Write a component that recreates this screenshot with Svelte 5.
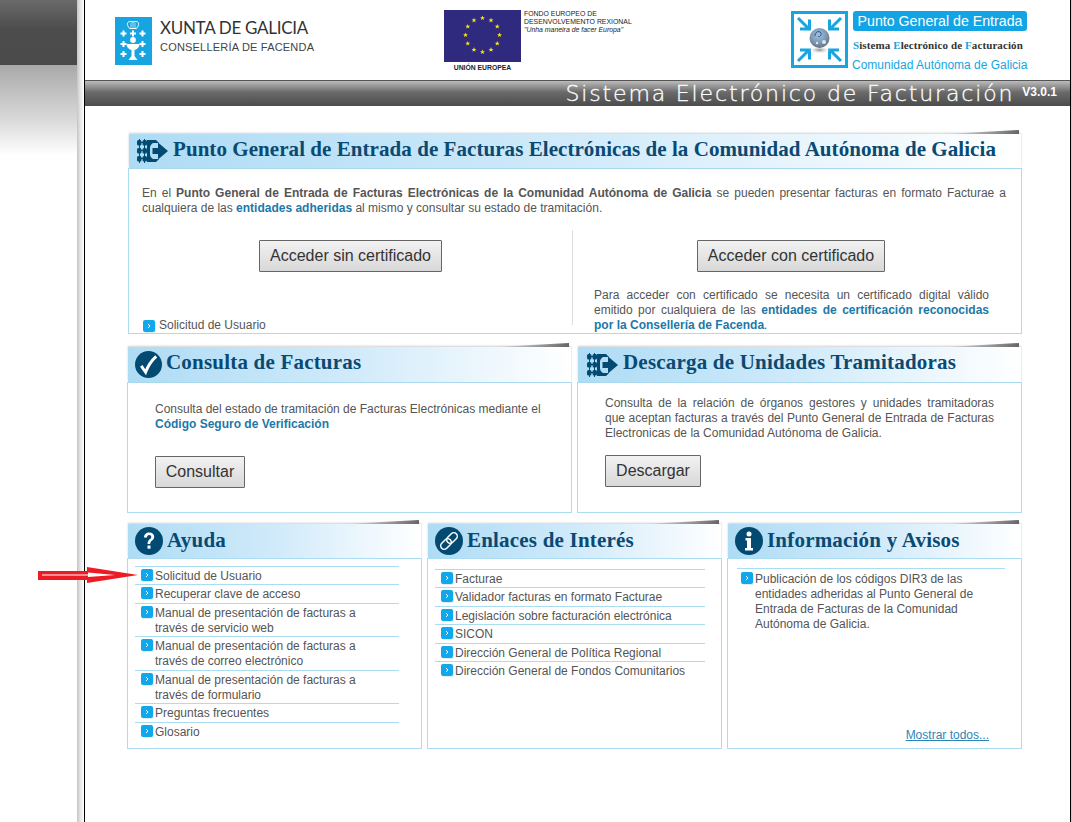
<script>
  const ayuda = [
    ['Solicitud de Usuario'],
    ['Recuperar clave de acceso'],
    ['Manual de presentación de facturas a', 'través de servicio web'],
    ['Manual de presentación de facturas a', 'través de correo electrónico'],
    ['Manual de presentación de facturas a', 'través de formulario'],
    ['Preguntas frecuentes'],
    ['Glosario']
  ];
  const enlaces = [
    ['Facturae'],
    ['Validador facturas en formato Facturae'],
    ['Legislación sobre facturación electrónica'],
    ['SICON'],
    ['Dirección General de Política Regional'],
    ['Dirección General de Fondos Comunitarios']
  ];
  const avisos = [['Publicación de los códigos DIR3 de las', 'entidades adheridas al Punto General de', 'Entrada de Facturas de la Comunidad', 'Autónoma de Galicia.']];
  const stars = Array.from({ length: 12 }, (_, i) => {
    const a = (i * Math.PI) / 6;
    return { x: 38.5 + 17 * Math.sin(a), y: 25 - 17 * Math.cos(a) };
  });
  const crosses = [[8.5,16.5],[18,16.5],[27.5,16.5],[8.5,27],[27.5,27],[8.5,37],[27.5,37]];
  const gridRows = [1, 9, 17];
</script>

{#snippet gridArrow()}
  <svg class="hicon arrowicon" viewBox="0 0 31 24" aria-hidden="true">
    {#each gridRows as y}
      <rect x="0" {y} width="4.500" height="5.500" rx="1.500" fill="#034a73"/>
      <rect x="5.500" {y} width="4.500" height="5.500" rx="1.500" fill="#034a73"/>
    {/each}
    <path fill="#034a73" d="M0 3h10v1H0zM0 11h10v1H0zM0 19h10v1H0zM2 0h1v24H2zM7 0h1v24H7z"/>
    <path fill="#034a73" d="M10 1h9l3 3h-6c-2 1-3 3-3 5v6c0 2 1 4 3 5h6l-3 3h-9z"/>
    <path fill="#034a73" d="M15.500 9H21V3.500l10 8.500-10 8.500V15h-5.500z"/>
  </svg>
{/snippet}

{#snippet circle(kind)}
  <svg class="hicon circleicon" viewBox="0 0 28 28" aria-hidden="true">
    <circle cx="14" cy="14" r="14" fill="#034a73"/>
    {#if kind === 'check'}
      <path d="M6.500 15.500 L11 22 C13.500 15 17 10 22 5.500" fill="none" stroke="#fff" stroke-width="3"/>
    {:else if kind === 'help'}
      <path d="M9 10.500c0-3 2.200-5 5.200-5 3 0 5 1.800 5 4.300 0 3.700-4 3.700-4 7.200h-2.700c0-4.800 3.800-4.700 3.800-7 0-1.200-.9-2-2.100-2-1.400 0-2.200 1-2.200 2.500z" fill="#fff"/>
      <rect x="12.500" y="18.500" width="3" height="3.200" fill="#fff"/>
    {:else if kind === 'info'}
      <circle cx="14" cy="7" r="2.500" fill="#fff"/>
      <path d="M10.500 11h5.500v10h2v2.500h-8V21h2v-7.500h-1.500z" fill="#fff"/>
    {:else}
      <g fill="none" stroke="#fff" stroke-width="1.500">
        <rect x="13.500" y="5" width="7" height="12" rx="3.500" transform="rotate(45 17 11)"/>
        <rect x="7.500" y="11" width="7" height="12" rx="3.500" transform="rotate(45 11 17)"/>
      </g>
    {/if}
  </svg>
{/snippet}

{#snippet bullet()}
  <span class="bullet"><svg viewBox="0 0 12 12" aria-hidden="true"><path d="M5 4l2 2-2 2" fill="none" stroke="#fff" stroke-width="1"/></svg></span>
{/snippet}

{#snippet links(items)}
  <ul class="links">
    {#each items as lines}
      <li>{@render bullet()}<span>{#each lines as l}<span class="line">{l}</span>{/each}</span></li>
    {/each}
  </ul>
{/snippet}

{#snippet head(title, variant)}
  <header class="phead {variant}">
    <span class="corner"></span>
    {#if title.startsWith('Punto') || title.startsWith('Descarga')}
      {@render gridArrow()}
    {:else if title.startsWith('Consulta')}
      {@render circle('check')}
    {:else if title.startsWith('Ayuda')}
      {@render circle('help')}
    {:else if title.startsWith('Enlaces')}
      {@render circle('link')}
    {:else}
      {@render circle('info')}
    {/if}
    <h2>{title}</h2>
  </header>
{/snippet}

<div class="page">
  <aside class="side"><div class="side-dark"></div><div class="side-fade"></div></aside>
  <div class="strip"></div>
  <main class="main">
    <div class="logos">
      <div class="xunta">
        <svg class="xmark" viewBox="0 0 37 48" aria-hidden="true">
          <rect width="37" height="48" fill="#16a5e0"/>
          <path d="M13.500 5c-2 1-1 4 1 6.500h7c2-2.500 3-5.500 1-6.500-1.500-1-3-.5-4.500 0-1.500-.5-3-1-4.500 0z" fill="none" stroke="#fff" stroke-width="1"/>
          <path d="M16 5.500v6M18 5v6.500M20 5.500v6" stroke="#fff" stroke-width=".6"/>
          <g fill="#fff">
            {#each crosses as c}
              <path d="M{c[0]-1} {c[1]-3}h2v2h2v2h-2v2h-2v-2h-2v-2h2z"/>
            {/each}
            <circle cx="18" cy="23" r="2.900"/>
            <path d="M11.500 27h13c0 4-3.500 5.500-5 6v6l3 4h-9l3-4v-6c-1.500-.5-5-2-5-6z"/>
          </g>
        </svg>
        <div class="xtext">
          <div class="xname">XUNTA DE GALICIA</div>
          <div class="xsub">CONSELLERÍA DE FACENDA</div>
        </div>
      </div>
      <div class="eu">
        <div class="eucol">
          <svg class="flag" viewBox="0 0 77 52" aria-hidden="true">
            <rect width="77" height="52" fill="#2f2a7d"/>
            {#each stars as s}
              <path transform="translate({s.x} {s.y})" d="M0-2.600.7-.8 2.500-.8 1.100.3 1.600 2.100 0 1 -1.600 2.100 -1.100.3 -2.500-.8 -.7-.8z" fill="#f6e11a"/>
            {/each}
          </svg>
          <div class="eucap">UNIÓN EUROPEA</div>
        </div>
        <div class="eutext">
          <div>FONDO EUROPEO DE</div>
          <div>DESENVOLVEMENTO REXIONAL</div>
          <div class="euit">"Unha maneira de facer Europa"</div>
        </div>
      </div>
      <div class="pge">
        <svg class="pgemark" viewBox="0 0 57 57" aria-hidden="true">
          <defs>
            <radialGradient id="globe" cx=".45" cy=".35" r=".7">
              <stop offset="0" stop-color="#9cc3e6"/>
              <stop offset=".6" stop-color="#7c95ae"/>
              <stop offset="1" stop-color="#5d6a78"/>
            </radialGradient>
            <radialGradient id="gshadow">
              <stop offset="0" stop-color="#888"/>
              <stop offset="1" stop-color="#fff" stop-opacity="0"/>
            </radialGradient>
          </defs>
          <rect x="1.500" y="1.500" width="54" height="54" fill="#fff" stroke="#16a5e0" stroke-width="3"/>
          <g fill="none" stroke="#16a5e0" stroke-width="3">
            <path d="M7 7l11 11M9 18h9.500V8.500"/>
            <path d="M50 7L39 18M48 18h-9.500V8.500"/>
            <path d="M7 50l11-11M9 39h9.500v9.500"/>
            <path d="M50 50L39 39M48 39h-9.500v9.500"/>
          </g>
          <ellipse cx="28.500" cy="39" rx="11" ry="4" fill="url(#gshadow)"/>
          <circle cx="28.500" cy="27" r="10" fill="url(#globe)"/>
          <path d="M24 25c0-4 4-6 6-3 1 2-2 5-3 3" fill="none" stroke="#2b4d78" stroke-width="1"/>
          <circle cx="33" cy="31" r="2" fill="#dce6f0"/>
          <circle cx="26" cy="32" r="1.200" fill="#dce6f0"/>
        </svg>
        <div class="pgetext">
          <div class="pill">Punto General de Entrada</div>
          <div class="pgesis"><b>S</b>istema <b>E</b>lectrónico de <b>F</b>acturación</div>
          <div class="pgecom">Comunidad Autónoma de Galicia</div>
        </div>
      </div>
    </div>
    <div class="band">
      <span class="bandtitle">Sistema Electrónico de Facturación</span>
      <span class="ver">V3.0.1</span>
    </div>

    <div class="content">
      <section class="panel wide">
        {@render head('Punto General de Entrada de Facturas Electrónicas de la Comunidad Autónoma de Galicia', 'hw')}
        <div class="pbody first">
          <p class="intro">En el <b>Punto General de Entrada de Facturas Electrónicas de la Comunidad Autónoma de Galicia</b> se pueden presentar facturas en formato Facturae a cualquiera de las <b class="lk">entidades adheridas</b> al mismo y consultar su estado de tramitación.</p>
          <div class="access">
            <div class="acol left">
              <button class="btn">Acceder sin certificado</button>
              <div class="sol">{@render bullet()}<span>Solicitud de Usuario</span></div>
            </div>
            <div class="acol right">
              <button class="btn">Acceder con certificado</button>
              <p class="cert">Para acceder con certificado se necesita un certificado digital válido emitido por cualquiera de las <b class="lk">entidades de certificación reconocidas por la Consellería de Facenda</b>.</p>
            </div>
          </div>
        </div>
      </section>

      <div class="row two">
        <section class="panel">
          {@render head('Consulta de Facturas', 'hm')}
          <div class="pbody mid">
            <p class="midtext">Consulta del estado de tramitación de Facturas Electrónicas mediante el <b class="lk">Código Seguro de Verificación</b></p>
            <button class="btn small">Consultar</button>
          </div>
        </section>
        <section class="panel">
          {@render head('Descarga de Unidades Tramitadoras', 'hm')}
          <div class="pbody mid rmid">
            <p class="midtext">Consulta de la relación de órganos gestores y unidades tramitadoras que aceptan facturas a través del Punto General de Entrada de Facturas Electronicas de la Comunidad Autónoma de Galicia.</p>
            <button class="btn small">Descargar</button>
          </div>
        </section>
      </div>

      <div class="row three">
        <section class="panel">
          {@render head('Ayuda', 'hs')}
          <div class="pbody low">{@render links(ayuda)}</div>
        </section>
        <section class="panel">
          {@render head('Enlaces de Interés', 'hs')}
          <div class="pbody low enl">{@render links(enlaces)}</div>
        </section>
        <section class="panel">
          {@render head('Información y Avisos', 'hs')}
          <div class="pbody low inf">
            {@render links(avisos)}
            <a class="more" href="#todos">Mostrar todos...</a>
          </div>
        </section>
      </div>
    </div>
  </main>
  <div class="edge"></div>
  <svg class="redarrow" viewBox="0 0 102 18" aria-hidden="true">
    <path d="M1 5h49V1l51 8-51 8v-3H1z" fill="#ed1c24"/>
    <path d="M5 8.500h46V6.500l27 2.500-27 2v-1.500H5z" fill="#fff"/>
  </svg>
</div>

<style>
  :global(body) { margin: 0; background: #fff; font-family: "Liberation Sans", Arial, sans-serif; }
  .page { position: relative; display: flex; width: 1072px; height: 822px; overflow: hidden; color: #555; }
  .side { width: 77px; flex: none; }
  .side-dark { height: 65px; background: linear-gradient(#6a6a6a, #4c4c4c 45%, #4a4a4a); }
  .side-fade { height: 90px; background: linear-gradient(#a9a9a9, #d8d8d8 60%, #fff); }
  .strip { width: 7px; flex: none; background: linear-gradient(90deg, #c4c4c4, #e4e4e4 45%, #fff); }
  .edge { width: 1px; flex: none; background: #ccc; }
  .main { width: 987px; flex: none; box-sizing: border-box; border-left: 1px solid #000; border-right: 1px solid #000; display: flex; flex-direction: column; }

  .logos { height: 80px; display: flex; padding-left: 30px; box-sizing: border-box; }
  .xunta { display: flex; gap: 8px; padding-top: 17px; width: 329px; box-sizing: border-box; }
  .xmark { width: 37px; height: 48px; flex: none; }
  .xtext { color: #333; }
  .xname { font: 400 17px/22px "Lato", sans-serif; letter-spacing: -.3px; color: #333; white-space: nowrap; }
  .xsub { font: 400 11px/14px "Liberation Sans", sans-serif; margin-top: 1px; letter-spacing: .2px; color: #444; white-space: nowrap; }
  .eu { display: flex; gap: 3px; padding-top: 10px; width: 347px; box-sizing: border-box; }
  .eucol { width: 77px; flex: none; text-align: center; }
  .flag { width: 77px; height: 52px; display: block; }
  .eucap { font: 700 6.800px/10px "Liberation Sans", sans-serif; margin-top: 1px; color: #222; }
  .eutext { font: 400 6.900px/8px "Liberation Sans", sans-serif; color: #222; white-space: nowrap; }
  .euit { font-style: italic; }
  .pge { display: flex; gap: 5px; padding-top: 11px; }
  .pgemark { width: 57px; height: 57px; flex: none; }
  .pgetext { width: 174px; }
  .pill { background: #12a4e4; color: #fff; font-size: 14.200px; line-height: 20px; border-radius: 3px; height: 20px; text-align: center; }
  .pgesis { font: 700 11px/12px "Liberation Serif", serif; margin-top: 8px; color: #333; white-space: nowrap; letter-spacing: .1px; }
  .pgesis b { color: #16a5e0; }
  .pgecom { font-size: 12px; line-height: 14px; color: #16a5e0; margin-top: 7px; white-space: nowrap; margin-left: -1px; }

  .band { height: 26px; box-sizing: border-box; border-top: 1px solid #555; background: linear-gradient(#bcbcbc, #6a6a6a 45%, #4c4c4c); display: flex; align-items: center; justify-content: flex-end; padding-right: 13px; color: #fff; }
  .bandtitle { font: 200 22px/24px "DejaVu Sans", sans-serif; letter-spacing: 1.850px; white-space: nowrap; -webkit-text-stroke: .3px #fff; }
  .ver { font: 700 12px/14px "Liberation Sans", sans-serif; margin-left: 8px; margin-top: -4px; }

  .content { padding: 28px 0 0 42px; width: 895px; display: flex; flex-direction: column; }
  .panel { position: relative; display: flex; flex-direction: column; min-width: 0; }
  .phead { position: relative; display: flex; align-items: center; gap: 4px; margin: 0 1px; padding-left: 7px; background: linear-gradient(90deg, #aedcf5, #d0eafa 50%, #fff); box-shadow: 0 -1px 2px rgba(120,120,120,.35); }
  .hw { height: 34px; margin-left: 2px; padding-left: 8px; gap: 5px; }
  .hm { height: 35px; }
  .hs { height: 34px; }
  .corner { position: absolute; right: 2px; top: -4px; width: 75px; height: 4px; background: linear-gradient(90deg, transparent, #666); clip-path: polygon(0 100%, 100% 0, 100% 100%); }
  h2 { margin: 0 0 5px; font: 700 21px/24px "Liberation Serif", serif; letter-spacing: .2px; color: #0a4a72; white-space: nowrap; }
  .hs h2 { margin-bottom: 3px; }
  .hw h2 { letter-spacing: .06px; }
  .hicon { flex: none; }
  .arrowicon { width: 31px; height: 24px; }
  .hm .arrowicon { margin-left: 2px; margin-right: 1px; }
  .circleicon { width: 27px; height: 27px; }
  .hs .circleicon { width: 28px; height: 28px; }
  .pbody { border: 1px solid #aadcf2; box-sizing: border-box; font-size: 12px; line-height: 15px; }
  .first { margin-left: 1px; height: 166px; padding-top: 17px; }
  .intro { margin: 0 15px 0 13px; text-align: justify; }
  .intro b, .cert b, .midtext b { color: #555; }
  b.lk, .intro b.lk, .cert b.lk, .midtext b.lk { color: #1c78a8; }
  .access { display: flex; margin-top: 14px; height: 95px; }
  .acol { position: relative; box-sizing: border-box; }
  .acol.left { width: 444px; flex: none; border-right: 1px solid #ddd; height: 95px; text-align: center; padding-top: 10px; }
  .acol.right { flex: 1; padding-top: 10px; padding-right: 12px; text-align: center; }
  .btn { font: 400 16px/18px "Liberation Sans", sans-serif; color: #333; height: 32px; padding: 0 10px; border: 1px solid #666; border-radius: 1px; background: linear-gradient(#f2f2f2, #d8d8d8); }
  .sol { position: absolute; left: 14px; bottom: -8px; display: flex; gap: 4px; align-items: center; }
  .cert { margin: 16px 20px 0 21px; text-align: justify; }
  .row { display: grid; }
  .two { grid-template-columns: 445px 445px; gap: 5px; margin-top: 13px; }
  .mid { height: 131px; padding: 19px 27px 0; }
  .rmid { padding-top: 13px; }
  .midtext { margin: 0; height: 54px; text-align: left; }
  .rmid .midtext { text-align: justify; height: 59px; }
  .btn.small { width: 90px; padding: 0; }
  .rmid .btn.small { width: 96px; }
  .three { grid-template-columns: 295px 295px 295px; gap: 5px; margin-top: 11px; }
  .low { height: 191px; padding: 7px 22px 0 7px; position: relative; }
  .enl { padding-top: 10px; padding-right: 16px; }
  .inf { padding-top: 9px; padding-left: 9px; padding-right: 16px; }
  ul.links { list-style: none; margin: 0; padding: 0; }
  ul.links li { display: flex; gap: 2px; border-top: 1px solid #aadcf2; padding: 2px 0 .45px 6px; }
  .inf ul.links li { padding-top: 3px; padding-left: 4px; }
  .line { display: block; }
  .bullet { width: 12px; height: 12px; background: #10a8ea; border-radius: 2px; flex: none; display: inline-flex; box-shadow: 1px 1px 0 #dfeef6; }
  .bullet svg { width: 12px; height: 12px; display: block; }
  .more { position: absolute; right: 32px; bottom: 5px; color: #2a86b8; text-decoration: underline; }
  .redarrow { position: absolute; left: 37px; top: 566px; width: 102px; height: 18px; }
</style>
